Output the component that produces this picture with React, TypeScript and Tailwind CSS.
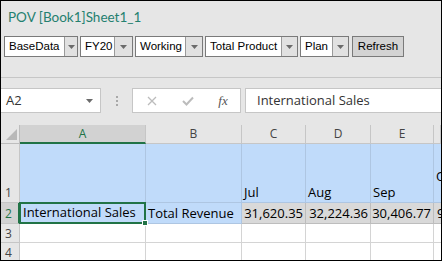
import React from 'react';

const POV = [
  { label: 'BaseData', w: 'w-[59px]', aw: 'w-[13px]' },
  { label: 'FY20', w: 'w-[33px]', aw: 'w-[18px]' },
  { label: 'Working', w: 'w-[49px]', aw: 'w-[17px]' },
  { label: 'Total Product', w: 'w-[75px]', aw: 'w-[16px]' },
  { label: 'Plan', w: 'w-[31px]', aw: 'w-[16px]' },
];

const COLS = ['A', 'B', 'C', 'D', 'E', ''];

function Caret({ className = '' }: { className?: string }) {
  return (
    <svg width="7" height="4" viewBox="0 0 7 4" className={className}>
      <path d="M0 0h7L3.5 4z" fill="#6b6b6b" />
    </svg>
  );
}

function PovSelect({ label, w, aw }: { label: string; w: string; aw: string }) {
  return (
    <div className="flex h-[21px] shrink-0 border border-[#7a7a7a] bg-white">
      <span
        className={`flex items-center whitespace-nowrap pl-[4px] text-[11.5px] leading-none text-black ${w}`}
        style={{ fontFamily: '"Liberation Sans", Arial, sans-serif' }}
      >
        {label}
      </span>
      <span className={`flex items-center justify-center border-l border-[#9a9a9a] bg-[#e1e1e1] ${aw}`}>
        <Caret />
      </span>
    </div>
  );
}

export default function App() {
  return (
    <div
      className="flex h-[261px] w-[442px] flex-col overflow-hidden border border-black bg-[#e6e6e6]"
      style={{ fontFamily: 'Lato, "Noto Sans", sans-serif' }}
    >
      {/* POV panel */}
      <div className="flex h-[77px] shrink-0 flex-col border-b border-[#c6c6c6] px-[3px]">
        <div className="mt-[7px] pl-[4px] text-[13.5px] leading-[18px] text-[#24806f]">POV [Book1]Sheet1_1</div>
        <div className="mt-[10px] flex items-center gap-[2px]">
          {POV.map((p) => (
            <PovSelect key={p.label} label={p.label} w={p.w} aw={p.aw} />
          ))}
          <button
            className="ml-[1px] flex h-[21px] w-[52px] items-center justify-center border border-[#7a7a7a] bg-[#d3d3d3] text-[11.5px] leading-none text-black"
            style={{ fontFamily: '"Liberation Sans", Arial, sans-serif' }}
          >
            Refresh
          </button>
        </div>
      </div>

      {/* formula bar */}
      <div
        className="flex h-[47px] shrink-0 items-start pt-[10px]"
        style={{ fontFamily: '"Open Sans", "Noto Sans", sans-serif' }}
      >
        <div className="flex h-[25px] w-[100px] shrink-0 items-center justify-between border border-l-0 border-[#c6c6c6] bg-white pl-[5px] pr-[7px] text-[13px] text-[#333]">
          <span>A2</span>
          <Caret />
        </div>
        <div className="flex h-[25px] w-[31px] shrink-0 flex-col items-center justify-center gap-[2px]">
          <span className="h-[2px] w-[2px] bg-[#a8a8a8]" />
          <span className="h-[2px] w-[2px] bg-[#a8a8a8]" />
          <span className="h-[2px] w-[2px] bg-[#a8a8a8]" />
        </div>
        <div className="flex h-[25px] w-[109px] shrink-0 items-center border border-[#c6c6c6] bg-white">
          <span className="flex w-[37px] justify-center">
            <svg width="10" height="10" viewBox="0 0 10 10">
              <path d="M1 1l8 8M9 1l-8 8" stroke="#bcbcbc" strokeWidth="1.3" />
            </svg>
          </span>
          <span className="flex w-[36px] justify-center">
            <svg width="12" height="10" viewBox="0 0 12 10">
              <path d="M1 5l3.5 3.5L11 1.5" stroke="#bcbcbc" strokeWidth="2" fill="none" />
            </svg>
          </span>
          <span className="flex w-[34px] justify-center font-['Liberation_Serif',serif] text-[13px] italic text-[#555]">fx</span>
        </div>
        <div className="ml-[4px] flex h-[25px] flex-1 items-center border border-r-0 border-[#c6c6c6] bg-white pl-[11px] text-[13px] text-[#333]">
          International Sales
        </div>
      </div>

      {/* sheet */}
      <div
        className="grid flex-1 grid-cols-[19px_126px_96px_64px_65px_63px_1fr] grid-rows-[19px_59px_21px_19px_19px] bg-white text-[13px] text-black"
        style={{ fontFamily: '"Open Sans", "Noto Sans", sans-serif' }}
      >
        {/* header row */}
        <div className="relative border-r border-b border-[#bdbdbd] bg-[#e6e6e6]">
          <svg width="11" height="11" viewBox="0 0 11 11" className="absolute bottom-[3px] right-[2px]">
            <path d="M11 0v11H0z" fill="#b8b8b8" />
          </svg>
        </div>
        {COLS.map((c, i) => (
          <div
            key={c || 'f'}
            className={`flex items-center justify-center border-r text-[12px] leading-none ${
              i === 0
                ? 'border-b-2 border-r-[#c6c6c6] border-b-[#217346] bg-[#d2d2d2] text-[#217346]'
                : 'border-b border-[#c6c6c6] bg-[#e6e6e6] text-[#444]'
            }`}
          >
            {c}
          </div>
        ))}

        {/* row 1 */}
        <div className="flex items-end border-r border-b border-[#c6c6c6] bg-[#e6e6e6] pb-[1px] pl-[4px] text-[12px] leading-[16px] text-[#444]">1</div>
        <div className="border-r border-b border-[#aec6e2] bg-[#c0dbfa]" />
        <div className="border-r border-b border-[#aec6e2] bg-[#c0dbfa]" />
        {['Jul', 'Aug', 'Sep'].map((m) => (
          <div key={m} className="flex items-end border-r border-b border-[#aec6e2] bg-[#c0dbfa] pb-[1px] pl-[2px] leading-[18px]">
            {m}
          </div>
        ))}
        <div className="overflow-hidden border-b border-[#aec6e2] bg-[#c0dbfa] pl-[2px] pt-[23px] leading-[18px]">Q</div>

        {/* row 2 */}
        <div className="flex items-end border-r-2 border-b border-r-[#217346] border-b-[#c6c6c6] bg-[#d2d2d2] pb-[1px] pl-[4px] text-[12px] leading-[16px] text-[#217346]">2</div>
        <div className="relative -ml-px -mt-px flex items-end border-2 border-[#217346] bg-[#c0dbfa] pl-[2px] pb-[1px] leading-[17px]">
          International Sales
          <span className="absolute -bottom-[4px] -right-[4px] h-[6px] w-[6px] border border-white bg-[#217346]" />
        </div>
        <div className="flex items-end whitespace-nowrap border-r border-b border-[#aec6e2] bg-[#c0dbfa] pb-[1px] pl-[2px] leading-[18px]">Total Revenue</div>
        {['31,620.35', '32,224.36', '30,406.77'].map((v) => (
          <div key={v} className="flex items-end justify-end border-r border-b border-[#bdbdbd] bg-[#d9d9d9] pb-[1px] pr-[2px] leading-[18px]">
            {v}
          </div>
        ))}
        <div className="overflow-hidden border-b border-[#bdbdbd] bg-[#d9d9d9] pb-[1px] pl-[3px] pt-[1px] leading-[18px]">9</div>

        {/* rows 3-4 */}
        {[3, 4].map((r) => (
          <React.Fragment key={r}>
            <div className="flex items-end border-r border-b border-[#c6c6c6] bg-[#e6e6e6] pl-[4px] text-[12px] leading-[17px] text-[#444]">{r}</div>
            {COLS.map((c, i) => (
              <div key={c || 'f'} className={`border-b border-[#d4d4d4] ${i < 5 ? 'border-r' : ''}`} />
            ))}
          </React.Fragment>
        ))}
      </div>
    </div>
  );
}
